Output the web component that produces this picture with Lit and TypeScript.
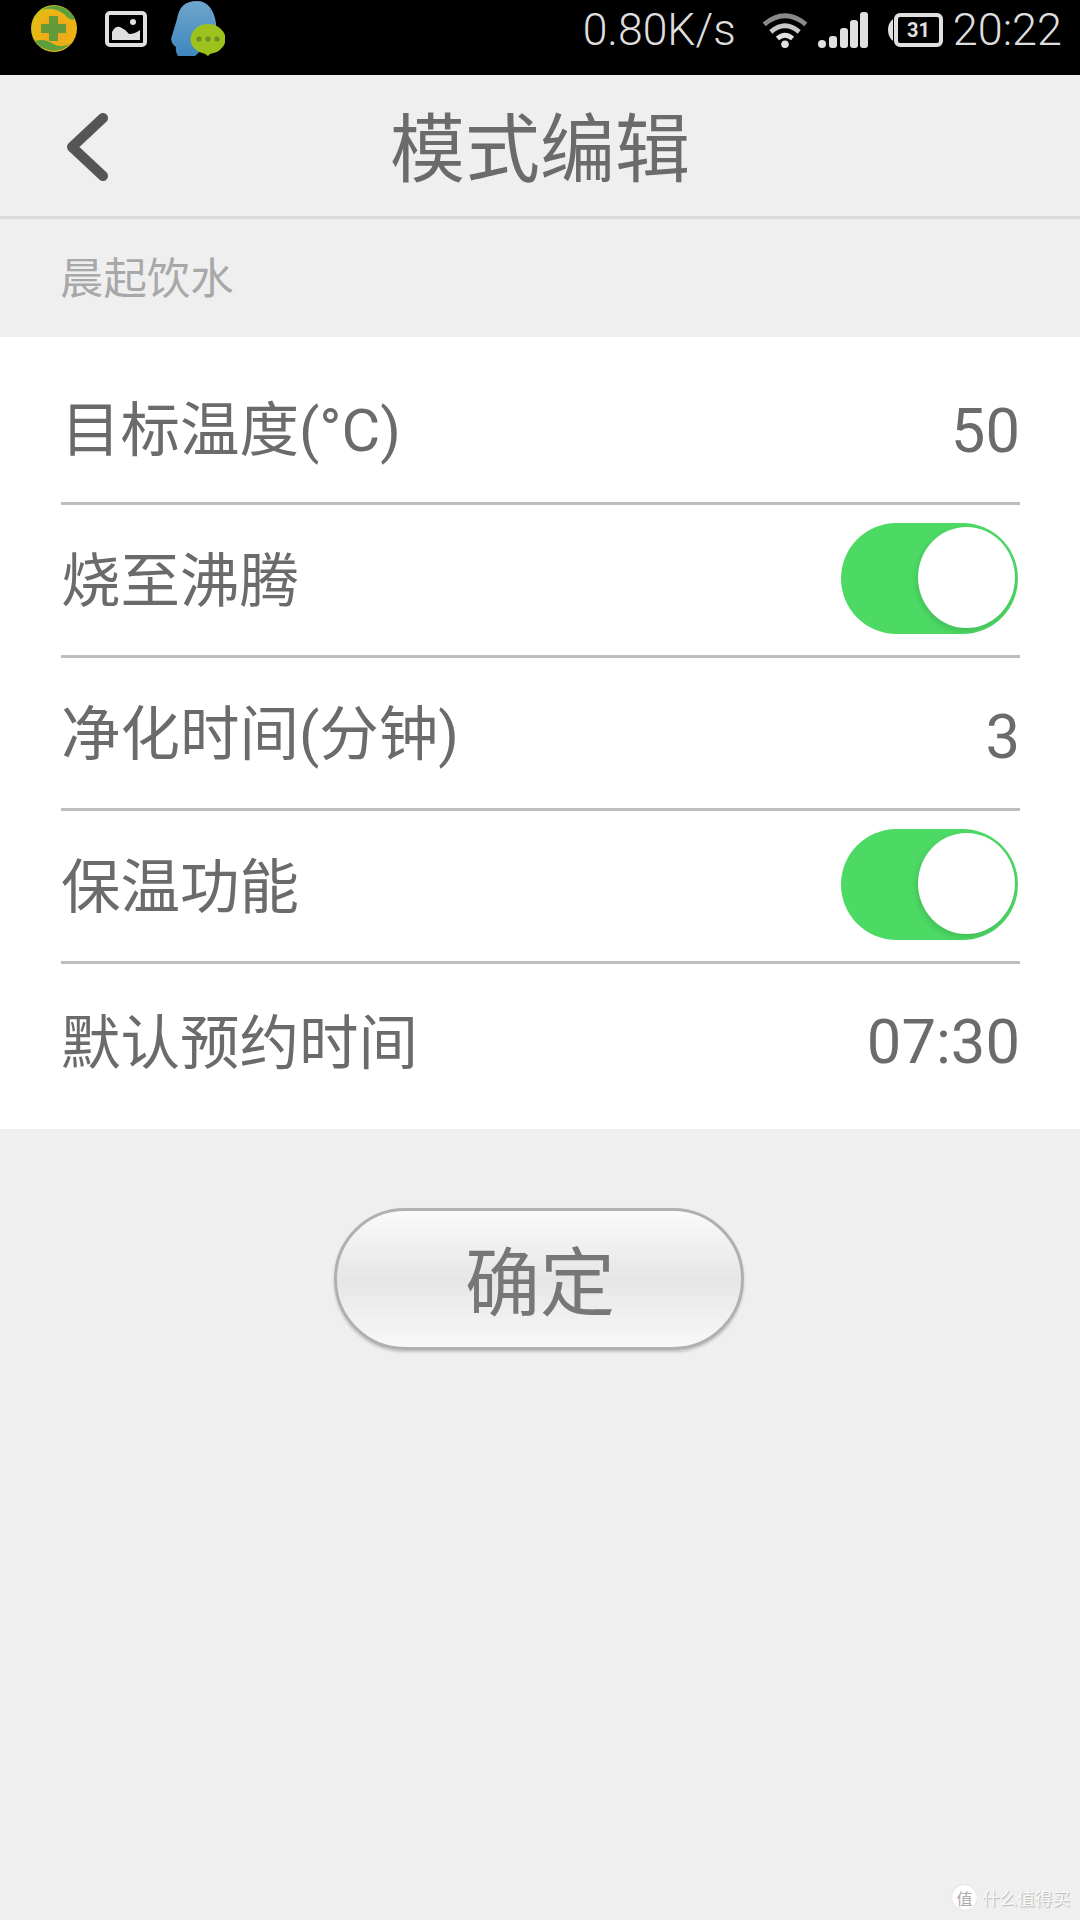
import { LitElement, html, css } from "lit";
import { customElement } from "lit/decorators.js";

const toggle = html`<div class="toggle"><div class="knob"></div></div>`;

@customElement("app-root")
export class AppRoot extends LitElement {
  static styles = css`
    :host { display: block; width: 1080px; height: 1920px; background: #efefef; position: relative; overflow: hidden;
      font-family: Roboto, "Noto Sans CJK SC", sans-serif; }
    .status { height: 75px; background: #000; display: flex; align-items: center; box-sizing: border-box; padding: 0 18px 15px 31px; color: #dedede; }
    .status svg { display: block; flex: none; }
    .left { display: flex; align-items: center; margin-bottom: 3px; }
    .i360 { margin-right: 28px; }
    .iimg { margin-right: 24px; }
    .spacer { flex: 1; }
    .speed { font-size: 44.5px; font-weight: 300; margin-right: 24px; line-height: 60px; }
    .wifi { margin-right: 8px; }
    .signal { margin-right: 19px; }
    .clock { font-size: 45px; font-weight: 300; margin-left: 10px; line-height: 60px; }
    .header { height: 141px; display: flex; align-items: center; justify-content: center; position: relative; box-sizing: border-box; padding-top: 10px; }
    .header svg { position: absolute; left: 65px; top: 37px; }
    .title { font-size: 75px; color: #6b6b6b; line-height: 1; }
    .hr { height: 3px; background: #d9d9d9; }
    .mode { height: 118px; box-sizing: border-box; padding: 0 0 6px 60px; display: flex; align-items: center; font-size: 43.4px; color: #a8a8a8; }
    .card { background: #fff; height: 792px; padding: 0 60px 0 61px; display: flex; flex-direction: column; }
    .row { display: flex; align-items: center; justify-content: space-between; height: 153px; box-sizing: border-box;
      border-bottom: 3px solid #bdbdbd; font-size: 59.5px; color: #6b6b6b; }
    .row.first { height: 168px; }
    .row.last { border-bottom: 0; flex: 1; }
    .value { font-size: 61.5px; }
    .up { margin-bottom: 8px; }
    .r1l { margin-top: 11px; }
    .r1v { margin-top: 22px; }
    .r3v { margin-top: 8px; }
    .r5l { margin-bottom: 17px; }
    .r5v { margin-bottom: 9px; }
    .toggle { width: 177px; height: 111px; border-radius: 56px; background: #4cd964; position: relative; margin: 0 2px 4px 0; }
    .knob { position: absolute; right: 3px; top: 4px; width: 97px; height: 101px; border-radius: 50%; background: #fff; box-shadow: -1px 3px 6px rgba(0,0,0,.13); }
    .actions { display: flex; justify-content: center; padding: 79px 2px 0 0; }
    .confirm { width: 410px; height: 142px; box-sizing: border-box; border: 3px solid #b0b0b0; border-radius: 71px; font-size: 75px; color: #777; padding: 0 0 4px 2px;
      display: flex; align-items: center; justify-content: center;
      background: linear-gradient(#fafafa 0%, #e6e6e6 50%, #f8f8f8 100%); box-shadow: 0 2px 3px rgba(0,0,0,.2); }
    .mark { position: absolute; right: 10px; bottom: 10px; display: flex; align-items: center; gap: 5px; color: #fafafa; font-size: 17.6px; text-shadow: 1px 1px 1px #b5b5b5; }
    .seal { width: 25px; height: 25px; border-radius: 50%; background: #fff; color: #aaa; font-size: 16px; display: flex; align-items: center; justify-content: center; text-shadow: none; box-shadow: 0 0 1px #bbb; }
  `;

  render() {
    return html`
      <div class="status">
        <div class="left">
          <svg class="i360" width="46" height="47" viewBox="0 0 46 47">
            <defs><radialGradient id="g" cx=".55" cy=".55" r=".55"><stop offset="0" stop-color="#f0a020"/><stop offset=".75" stop-color="#ecb414"/><stop offset="1" stop-color="#d6c018"/></radialGradient></defs>
            <ellipse cx="23" cy="23.5" rx="23" ry="23.5" fill="url(#g)"/>
            <path d="M10 5A23 23 0 0 1 44 14Q40 17 33 9Q22 1 10 5Z" fill="#5ba03c"/>
            <path d="M4 36Q14 33 22 39Q32 44 40 38A23 23 0 0 1 4 36Z" fill="#5ba03c"/>
            <path d="M18 11h9v8h8v9h-8v8h-9v-8h-8v-9h8z" fill="#649a38"/>
          </svg>
          <svg class="iimg" width="42" height="36" viewBox="0 0 42 36">
            <rect x="2" y="2" width="38" height="32" rx="3" fill="none" stroke="#e0e0e0" stroke-width="4"/>
            <path d="M7 29V21Q10 15 15 16Q20 18 24 23Q30 23 35 19V29Z" fill="#e0e0e0"/>
            <circle cx="28" cy="11" r="3" fill="#e0e0e0"/>
          </svg>
          <svg width="54" height="55" viewBox="0 0 54 55">
            <defs><linearGradient id="p" x1="0" y1="0" x2="0" y2="1"><stop offset="0" stop-color="#6fa6cc"/><stop offset="1" stop-color="#3f86bd"/></linearGradient></defs>
            <path d="M26 0C36 0 43 8 45 22L45 36L24 55H7Q4 50 5 46Q1 44 0 38Q3 28 6 18C8 6 14 0 26 0Z" fill="url(#p)"/>
            <ellipse cx="37" cy="38" rx="17.5" ry="15" fill="#9dc21d"/>
            <path d="M27 48L37 55L41 51Z" fill="#9dc21d"/>
            <circle cx="28" cy="38" r="2.6" fill="#6a8f1e"/><circle cx="37" cy="38" r="2.6" fill="#6a8f1e"/><circle cx="46" cy="38" r="2.6" fill="#6a8f1e"/>
          </svg>
        </div>
        <div class="spacer"></div>
        <div class="speed">0.80K/s</div>
        <svg class="wifi" width="50" height="36" viewBox="0 0 50 38">
          <path d="M3 13Q25 -5 47 13" fill="none" stroke="#8a8a8a" stroke-width="5"/>
          <path d="M10 21Q25 8 40 21" fill="none" stroke="#c8c8c8" stroke-width="5"/>
          <path d="M17 28Q25 21 33 28" fill="none" stroke="#e0e0e0" stroke-width="5"/>
          <circle cx="25" cy="34" r="4" fill="#e0e0e0"/>
        </svg>
        <svg class="signal" width="50" height="36" viewBox="0 0 50 36">
          <rect x="0" y="28" width="8" height="8" rx="4" fill="#e0e0e0"/>
          <rect x="11" y="24" width="8" height="12" rx="3" fill="#e0e0e0"/>
          <rect x="22" y="16" width="8" height="20" rx="3" fill="#e0e0e0"/>
          <rect x="32" y="8" width="8" height="28" rx="3" fill="#e0e0e0"/>
          <rect x="42" y="0" width="8" height="36" rx="3" fill="#e0e0e0"/>
        </svg>
        <svg width="56" height="34" viewBox="0 0 56 34">
          <path d="M6 6Q1 10 1 17Q1 24 6 28Z" fill="#e0e0e0"/>
          <rect x="9" y="2" width="45" height="30" rx="4" fill="none" stroke="#e0e0e0" stroke-width="4"/>
          <text x="31.5" y="24" text-anchor="middle" font-size="20" font-weight="700" fill="#e0e0e0" font-family="Roboto">31</text>
        </svg>
        <div class="clock">20:22</div>
      </div>
      <div class="header">
        <svg width="46" height="70" viewBox="0 0 46 70"><path d="M38 6L7 35L38 64" fill="none" stroke="#555" stroke-width="10" stroke-linecap="round" stroke-linejoin="round"/></svg>
        <div class="title">模式编辑</div>
      </div>
      <div class="hr"></div>
      <div class="mode">晨起饮水</div>
      <div class="card">
        <div class="row first"><span class="r1l">目标温度(°C)</span><span class="value r1v">50</span></div>
        <div class="row"><span class="up">烧至沸腾</span>${toggle}</div>
        <div class="row"><span class="up">净化时间(分钟)</span><span class="value r3v">3</span></div>
        <div class="row"><span class="up">保温功能</span>${toggle}</div>
        <div class="row last"><span class="r5l">默认预约时间</span><span class="value r5v">07:30</span></div>
      </div>
      <div class="actions"><div class="confirm">确定</div></div>
      <div class="mark"><span class="seal">值</span><span>什么值得买</span></div>
    `;
  }
}
